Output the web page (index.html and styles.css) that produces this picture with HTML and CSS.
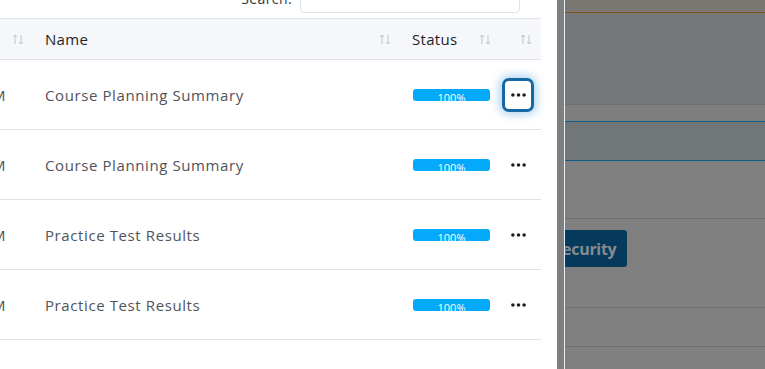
FILE: index.html
```html
<!DOCTYPE html>
<html>
<head>
  <meta charset="utf-8">
  <link rel="stylesheet" href="styles.css">
</head>
<body>
  <div class="page">
    <div class="list-panel">
      <div class="search-bar">
        <label class="search-label" for="search">Search:</label>
        <input id="search" class="search-input" type="text">
      </div>

      <div class="table-wrap">
        <table class="data-table">
          <colgroup>
            <col class="col-date">
            <col class="col-name">
            <col class="col-status">
            <col class="col-action">
          </colgroup>
          <thead>
            <tr>
              <th><div class="th-inner"><span>Date</span><svg class="sort-icon" viewBox="0 0 12 12"><path d="M3 1.5v9M1 3.5l2-2 2 2M9 1.5v9M7 8.5l2 2 2-2"/></svg></div></th>
              <th><div class="th-inner"><span>Name</span><svg class="sort-icon" viewBox="0 0 12 12"><path d="M3 1.5v9M1 3.5l2-2 2 2M9 1.5v9M7 8.5l2 2 2-2"/></svg></div></th>
              <th><div class="th-inner"><span>Status</span><svg class="sort-icon" viewBox="0 0 12 12"><path d="M3 1.5v9M1 3.5l2-2 2 2M9 1.5v9M7 8.5l2 2 2-2"/></svg></div></th>
              <th><div class="th-inner"><span></span><svg class="sort-icon" viewBox="0 0 12 12"><path d="M3 1.5v9M1 3.5l2-2 2 2M9 1.5v9M7 8.5l2 2 2-2"/></svg></div></th>
            </tr>
          </thead>
          <tbody>
            <tr>
              <td class="td-date">10:42 AM</td>
              <td>Course Planning Summary</td>
              <td><div class="progress"><div class="progress-fill" style="width: 100%">100%</div></div></td>
              <td><button class="dots-btn focused"><svg viewBox="0 0 16 4"><circle cx="2" cy="2" r="1.9"/><circle cx="8" cy="2" r="1.9"/><circle cx="14" cy="2" r="1.9"/></svg></button></td>
            </tr>
            <tr>
              <td class="td-date">09:15 AM</td>
              <td>Course Planning Summary</td>
              <td><div class="progress"><div class="progress-fill" style="width: 100%">100%</div></div></td>
              <td><button class="dots-btn"><svg viewBox="0 0 16 4"><circle cx="2" cy="2" r="1.9"/><circle cx="8" cy="2" r="1.9"/><circle cx="14" cy="2" r="1.9"/></svg></button></td>
            </tr>
            <tr>
              <td class="td-date">08:03 PM</td>
              <td>Practice Test Results</td>
              <td><div class="progress"><div class="progress-fill" style="width: 100%">100%</div></div></td>
              <td><button class="dots-btn"><svg viewBox="0 0 16 4"><circle cx="2" cy="2" r="1.9"/><circle cx="8" cy="2" r="1.9"/><circle cx="14" cy="2" r="1.9"/></svg></button></td>
            </tr>
            <tr>
              <td class="td-date">07:51 PM</td>
              <td>Practice Test Results</td>
              <td><div class="progress"><div class="progress-fill" style="width: 100%">100%</div></div></td>
              <td><button class="dots-btn"><svg viewBox="0 0 16 4"><circle cx="2" cy="2" r="1.9"/><circle cx="8" cy="2" r="1.9"/><circle cx="14" cy="2" r="1.9"/></svg></button></td>
            </tr>
            <tr>
              <td class="td-date">05:20 PM</td>
              <td>Weekly Lesson Plan</td>
              <td><div class="progress"><div class="progress-fill" style="width: 100%">100%</div></div></td>
              <td><button class="dots-btn"><svg viewBox="0 0 16 4"><circle cx="2" cy="2" r="1.9"/><circle cx="8" cy="2" r="1.9"/><circle cx="14" cy="2" r="1.9"/></svg></button></td>
            </tr>
          </tbody>
        </table>
      </div>
    </div>

    <div class="scroll-strip"></div>
    <div class="divider"></div>

    <div class="backdrop">
      <div class="bd-top"></div>
      <div class="bd-accent"></div>
      <div class="bd-hero"></div>
      <div class="bd-sub"></div>
      <div class="bd-notice"></div>
      <div class="bd-body">
        <button class="bd-btn">Security</button>
      </div>
      <div class="bd-row"></div>
      <div class="bd-row"></div>
    </div>
  </div>
</body>
</html>
```

FILE: styles.css
```css
* {
  box-sizing: border-box;
  margin: 0;
  padding: 0;
}

body {
  width: 765px;
  height: 369px;
  overflow: hidden;
  font-family: 'Open Sans', 'Noto Sans', sans-serif;
  background: #ffffff;
  color: #212529;
}

.page {
  display: flex;
  height: 369px;
}

/* Left list */
.list-panel {
  width: 557px;
  flex-shrink: 0;
  background: #ffffff;
  overflow: hidden;
}

.search-bar {
  height: 18px;
  display: flex;
  justify-content: flex-end;
  align-items: flex-end;
  gap: 8px;
  padding-right: 37px;
}

.search-label {
  font-size: 14px;
  color: #333;
  letter-spacing: 0.4px;
  line-height: 20px;
  margin-bottom: 9px;
}

.search-input {
  width: 220px;
  height: 34px;
  margin-bottom: 5px;
  border: 1px solid #dde2e8;
  border-radius: 4px;
  background: #fff;
}

.table-wrap {
  margin-left: -100px;
  width: 641px;
}

.data-table {
  width: 641px;
  table-layout: fixed;
  border-collapse: collapse;
}

.col-date { width: 133px; }
.col-name { width: 367px; }
.col-status { width: 100px; }
.col-action { width: 41px; }

.data-table th {
  height: 41px;
  background: #f5f7fa;
  border-top: 1px solid #dde3e9;
  border-bottom: 1px solid #dde3e9;
  padding: 0 9px 0 12px;
  font-size: 15px;
  font-weight: 500;
  letter-spacing: 0.3px;
  color: #1f2328;
  text-align: left;
}

.th-inner {
  display: flex;
  align-items: center;
  justify-content: space-between;
}

.sort-icon {
  width: 12px;
  height: 13px;
  fill: none;
  stroke: #bfc5cd;
  stroke-width: 1;
}

.data-table td {
  height: 70px;
  border-bottom: 1px solid #dde3e9;
  padding: 0 12px;
  font-size: 15px;
  letter-spacing: 0.6px;
  color: #4f545a;
  white-space: nowrap;
}

.data-table .td-date {
  text-align: right;
  padding-right: 27px;
}

.progress {
  width: 77px;
  height: 12px;
  margin-left: 1px;
  border-radius: 3px;
  background: #e9ecef;
  overflow: hidden;
}

.progress-fill {
  height: 12px;
  background: #05a9fb;
  color: #ffffff;
  font-size: 11px;
  letter-spacing: 0;
  line-height: 12px;
  padding-top: 3px;
  text-align: center;
}

.dots-btn {
  width: 32px;
  height: 34px;
  margin-left: -10px;
  margin-top: 1px;
  border: 3px solid transparent;
  border-radius: 7px;
  background: #ffffff;
  display: flex;
  align-items: center;
  justify-content: center;
}

.dots-btn svg {
  width: 15px;
  height: 4px;
  fill: #1e1f22;
}

.dots-btn.focused {
  border-color: #1568a3;
  box-shadow: 0 0 8px 3px rgba(36, 137, 214, 0.35);
}

/* Strip + divider */
.scroll-strip {
  width: 7px;
  flex-shrink: 0;
  background: #7f7f7f;
}

.divider {
  width: 1px;
  flex-shrink: 0;
  background: #e6edf5;
}

/* Dimmed page behind the panel */
.backdrop {
  flex: 1;
  background: #808080;
  overflow: hidden;
}

.bd-top {
  height: 12px;
  background: #7a7672;
}

.bd-accent {
  height: 1px;
  background: #7f5519;
}

.bd-hero {
  height: 92px;
  background: #76777a;
  border-bottom: 1px solid #6f7073;
}

.bd-sub {
  height: 16px;
  background: #7f7f7f;
}

.bd-notice {
  height: 40px;
  background: #717778;
  border-top: 1px solid #0f5b8b;
  border-bottom: 1px solid #0f5b8b;
}

.bd-body {
  height: 147px;
  padding-top: 69px;
  border-bottom: 1px solid #6e6e6e;
}

.bd-body::before {
  content: '';
  display: block;
  height: 1px;
  background: #6d6d6d;
  margin-top: -12px;
  margin-bottom: 11px;
}

.bd-btn {
  margin-left: -22px;
  width: 84px;
  height: 37px;
  border: none;
  border-radius: 3px;
  background: #053a5d;
  color: #868b91;
  font-family: 'Open Sans', sans-serif;
  font-size: 16px;
  font-weight: 700;
  letter-spacing: -0.3px;
}

.bd-row {
  height: 39px;
  border-bottom: 1px solid #6e6e6e;
}
```
